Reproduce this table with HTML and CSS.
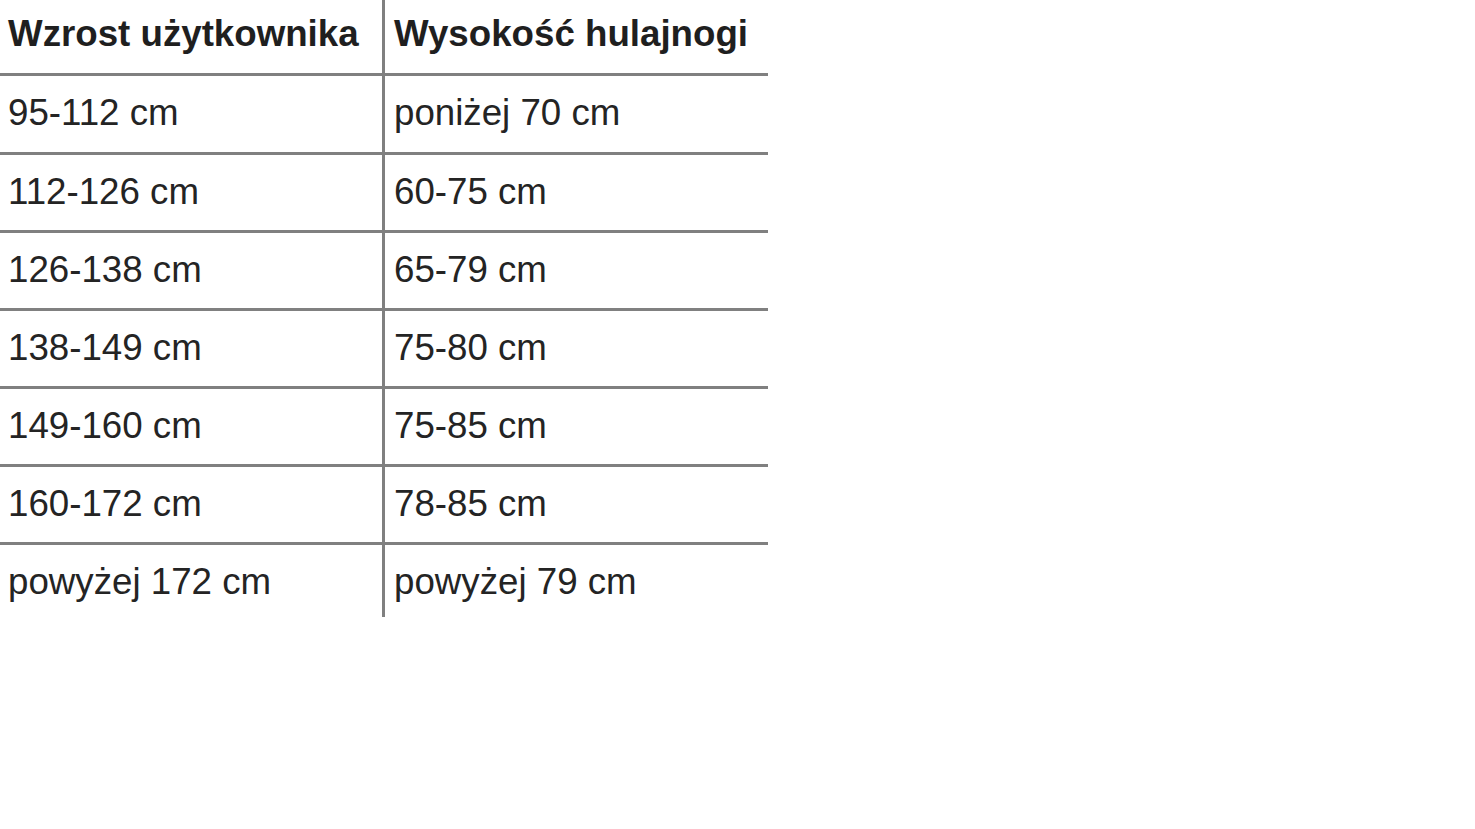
FILE: index.html
```html
<!DOCTYPE html>
<html lang="pl">
<head>
<meta charset="utf-8">
<title>Tabela rozmiarów</title>
<link rel="stylesheet" href="styles.css">
</head>
<body>
<div class="size-table">
  <div class="cell head left">Wzrost użytkownika</div>
  <div class="cell head right">Wysokość hulajnogi</div>
  <div class="cell left">95-112 cm</div>
  <div class="cell right">poniżej 70 cm</div>
  <div class="cell left">112-126 cm</div>
  <div class="cell right">60-75 cm</div>
  <div class="cell left">126-138 cm</div>
  <div class="cell right">65-79 cm</div>
  <div class="cell left">138-149 cm</div>
  <div class="cell right">75-80 cm</div>
  <div class="cell left">149-160 cm</div>
  <div class="cell right">75-85 cm</div>
  <div class="cell left">160-172 cm</div>
  <div class="cell right">78-85 cm</div>
  <div class="cell left last">powyżej 172 cm</div>
  <div class="cell right last">powyżej 79 cm</div>
</div>
</body>
</html>
```

FILE: styles.css
```css
html, body {
  margin: 0;
  padding: 0;
  background: #ffffff;
}

body {
  font-family: "Liberation Sans", Arial, sans-serif;
  color: #242424;
}

.size-table {
  display: grid;
  width: 768px;
  grid-template-columns: 385px 383px;
  grid-template-rows: 76px 79px 78px 78px 78px 78px 78px 72px;
  font-size: 36.7px;
  line-height: 41px;
}

.cell {
  box-sizing: border-box;
  padding: 16px 0 0 8px;
  border-bottom: 3px solid #808080;
  white-space: nowrap;
}

.cell.left {
  border-right: 3px solid #808080;
}

.cell.right {
  padding-left: 9px;
}

.cell.head {
  font-weight: bold;
  padding-top: 13px;
  color: #1f1f1f;
}

.cell.last {
  border-bottom: none;
}
```
